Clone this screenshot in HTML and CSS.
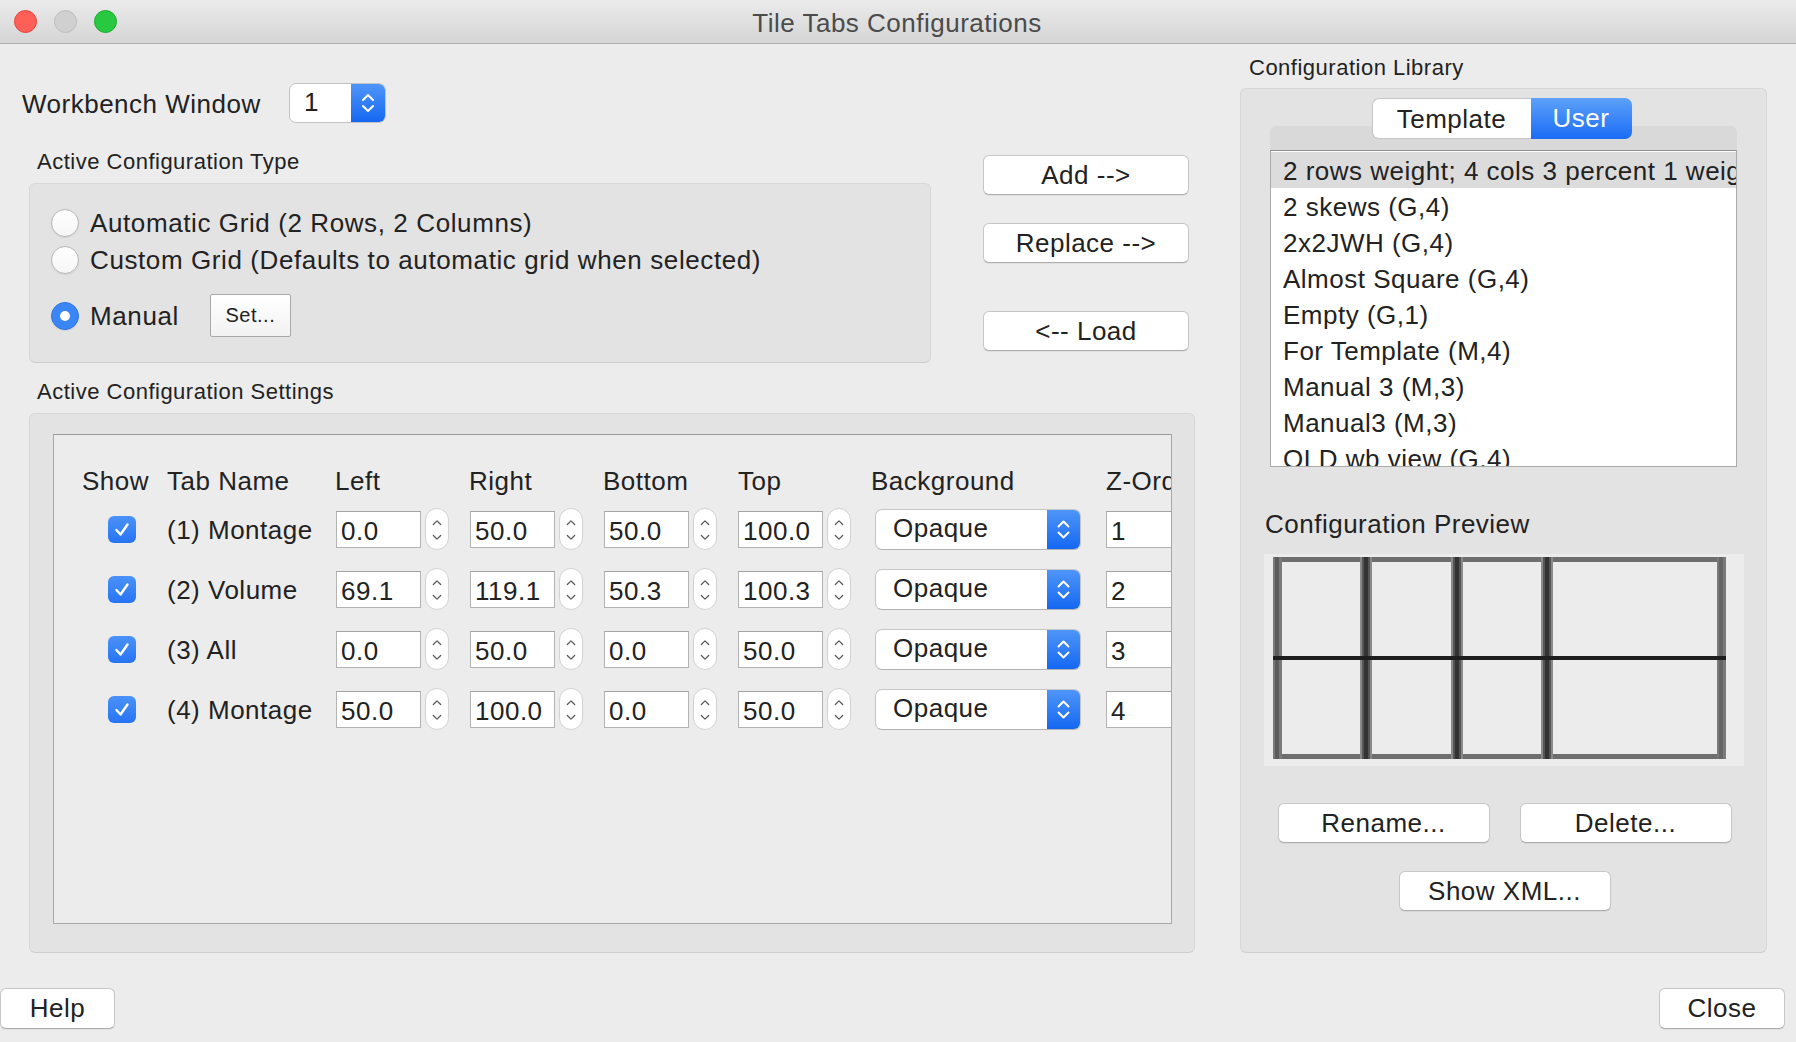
FILE: index.html
```html
<!DOCTYPE html>
<html>
<head>
<meta charset="utf-8">
<title>Tile Tabs Configurations</title>
<link rel="stylesheet" href="styles.css">
</head>
<body>
<div class="window">
  <div class="titlebar">
    <div class="lights"><span class="light red"></span><span class="light gray"></span><span class="light green"></span></div>
    <div class="title">Tile Tabs Configurations</div>
    <div></div>
  </div>
  <div class="body">
    <div class="main">
      <div class="left">
        <div class="wb-row">
          <span class="wb-label">Workbench Window</span>
          <div class="spinbox">
            <span class="spin-value">1</span>
            <span class="blue-btn"><svg width="34" height="40" viewBox="0 0 34 40"><path d="M12 17 L17 12 L22 17 M12 23 L17 28 L22 23" fill="none" stroke="#fff" stroke-width="2" stroke-linecap="round" stroke-linejoin="round"/></svg></span>
          </div>
        </div>
        <div class="upper">
          <div class="type-col">
            <div class="section-label">Active Configuration Type</div>
            <div class="group group-type">
              <div class="radio-row"><span class="radio"></span><span class="radio-text">Automatic Grid (2 Rows, 2 Columns)</span></div>
              <div class="radio-row"><span class="radio"></span><span class="radio-text">Custom Grid (Defaults to automatic grid when selected)</span></div>
              <div class="radio-row manual-row"><span class="radio on"></span><span class="radio-text">Manual</span><button class="set-btn">Set...</button></div>
            </div>
          </div>
          <div class="action-col">
            <button class="btn act">Add --&gt;</button>
            <button class="btn act act-replace">Replace --&gt;</button>
            <button class="btn act act-load">&lt;-- Load</button>
          </div>
        </div>
        <div class="section-label settings-label">Active Configuration Settings</div>
        <div class="group group-settings">
          <div class="scroll">
            <div class="tbl">
              <div class="trow thead">
                <div class="c-show">Show</div>
                <div class="c-name">Tab Name</div>
                <div class="c-num">Left</div>
                <div class="c-num">Right</div>
                <div class="c-num">Bottom</div>
                <div class="c-top">Top</div>
                <div class="c-bg">Background</div>
                <div class="c-z">Z-Order</div>
              </div>

              <div class="trow">
                <div class="c-show"><span class="check"><svg width="28" height="27" viewBox="0 0 28 27"><path d="M8.5 14 L12.5 18.5 L19.5 8.5" fill="none" stroke="#fff" stroke-width="2.4" stroke-linecap="round" stroke-linejoin="round"/></svg></span></div>
                <div class="c-name">(1) Montage</div>
                <div class="c-num"><span class="inp">0.0</span><span class="spin"><svg width="24" height="42" viewBox="0 0 24 42"><path d="M8 15 L12 11 L16 15 M8 27 L12 31 L16 27" fill="none" stroke="#5a5a5a" stroke-width="1.4" stroke-linecap="round" stroke-linejoin="round"/></svg></span></div>
                <div class="c-num"><span class="inp">50.0</span><span class="spin"><svg width="24" height="42" viewBox="0 0 24 42"><path d="M8 15 L12 11 L16 15 M8 27 L12 31 L16 27" fill="none" stroke="#5a5a5a" stroke-width="1.4" stroke-linecap="round" stroke-linejoin="round"/></svg></span></div>
                <div class="c-num"><span class="inp">50.0</span><span class="spin"><svg width="24" height="42" viewBox="0 0 24 42"><path d="M8 15 L12 11 L16 15 M8 27 L12 31 L16 27" fill="none" stroke="#5a5a5a" stroke-width="1.4" stroke-linecap="round" stroke-linejoin="round"/></svg></span></div>
                <div class="c-top"><span class="inp">100.0</span><span class="spin"><svg width="24" height="42" viewBox="0 0 24 42"><path d="M8 15 L12 11 L16 15 M8 27 L12 31 L16 27" fill="none" stroke="#5a5a5a" stroke-width="1.4" stroke-linecap="round" stroke-linejoin="round"/></svg></span></div>
                <div class="c-bg"><span class="combo"><span class="combo-text">Opaque</span><span class="blue-btn"><svg width="33" height="39" viewBox="0 0 33 39"><path d="M11.5 16.5 L16.5 11.5 L21.5 16.5 M11.5 22.5 L16.5 27.5 L21.5 22.5" fill="none" stroke="#fff" stroke-width="2" stroke-linecap="round" stroke-linejoin="round"/></svg></span></span></div>
                <div class="c-z"><span class="inp zinp">1</span></div>
              </div>

              <div class="trow">
                <div class="c-show"><span class="check"><svg width="28" height="27" viewBox="0 0 28 27"><path d="M8.5 14 L12.5 18.5 L19.5 8.5" fill="none" stroke="#fff" stroke-width="2.4" stroke-linecap="round" stroke-linejoin="round"/></svg></span></div>
                <div class="c-name">(2) Volume</div>
                <div class="c-num"><span class="inp">69.1</span><span class="spin"><svg width="24" height="42" viewBox="0 0 24 42"><path d="M8 15 L12 11 L16 15 M8 27 L12 31 L16 27" fill="none" stroke="#5a5a5a" stroke-width="1.4" stroke-linecap="round" stroke-linejoin="round"/></svg></span></div>
                <div class="c-num"><span class="inp">119.1</span><span class="spin"><svg width="24" height="42" viewBox="0 0 24 42"><path d="M8 15 L12 11 L16 15 M8 27 L12 31 L16 27" fill="none" stroke="#5a5a5a" stroke-width="1.4" stroke-linecap="round" stroke-linejoin="round"/></svg></span></div>
                <div class="c-num"><span class="inp">50.3</span><span class="spin"><svg width="24" height="42" viewBox="0 0 24 42"><path d="M8 15 L12 11 L16 15 M8 27 L12 31 L16 27" fill="none" stroke="#5a5a5a" stroke-width="1.4" stroke-linecap="round" stroke-linejoin="round"/></svg></span></div>
                <div class="c-top"><span class="inp">100.3</span><span class="spin"><svg width="24" height="42" viewBox="0 0 24 42"><path d="M8 15 L12 11 L16 15 M8 27 L12 31 L16 27" fill="none" stroke="#5a5a5a" stroke-width="1.4" stroke-linecap="round" stroke-linejoin="round"/></svg></span></div>
                <div class="c-bg"><span class="combo"><span class="combo-text">Opaque</span><span class="blue-btn"><svg width="33" height="39" viewBox="0 0 33 39"><path d="M11.5 16.5 L16.5 11.5 L21.5 16.5 M11.5 22.5 L16.5 27.5 L21.5 22.5" fill="none" stroke="#fff" stroke-width="2" stroke-linecap="round" stroke-linejoin="round"/></svg></span></span></div>
                <div class="c-z"><span class="inp zinp">2</span></div>
              </div>

              <div class="trow">
                <div class="c-show"><span class="check"><svg width="28" height="27" viewBox="0 0 28 27"><path d="M8.5 14 L12.5 18.5 L19.5 8.5" fill="none" stroke="#fff" stroke-width="2.4" stroke-linecap="round" stroke-linejoin="round"/></svg></span></div>
                <div class="c-name">(3) All</div>
                <div class="c-num"><span class="inp">0.0</span><span class="spin"><svg width="24" height="42" viewBox="0 0 24 42"><path d="M8 15 L12 11 L16 15 M8 27 L12 31 L16 27" fill="none" stroke="#5a5a5a" stroke-width="1.4" stroke-linecap="round" stroke-linejoin="round"/></svg></span></div>
                <div class="c-num"><span class="inp">50.0</span><span class="spin"><svg width="24" height="42" viewBox="0 0 24 42"><path d="M8 15 L12 11 L16 15 M8 27 L12 31 L16 27" fill="none" stroke="#5a5a5a" stroke-width="1.4" stroke-linecap="round" stroke-linejoin="round"/></svg></span></div>
                <div class="c-num"><span class="inp">0.0</span><span class="spin"><svg width="24" height="42" viewBox="0 0 24 42"><path d="M8 15 L12 11 L16 15 M8 27 L12 31 L16 27" fill="none" stroke="#5a5a5a" stroke-width="1.4" stroke-linecap="round" stroke-linejoin="round"/></svg></span></div>
                <div class="c-top"><span class="inp">50.0</span><span class="spin"><svg width="24" height="42" viewBox="0 0 24 42"><path d="M8 15 L12 11 L16 15 M8 27 L12 31 L16 27" fill="none" stroke="#5a5a5a" stroke-width="1.4" stroke-linecap="round" stroke-linejoin="round"/></svg></span></div>
                <div class="c-bg"><span class="combo"><span class="combo-text">Opaque</span><span class="blue-btn"><svg width="33" height="39" viewBox="0 0 33 39"><path d="M11.5 16.5 L16.5 11.5 L21.5 16.5 M11.5 22.5 L16.5 27.5 L21.5 22.5" fill="none" stroke="#fff" stroke-width="2" stroke-linecap="round" stroke-linejoin="round"/></svg></span></span></div>
                <div class="c-z"><span class="inp zinp">3</span></div>
              </div>

              <div class="trow">
                <div class="c-show"><span class="check"><svg width="28" height="27" viewBox="0 0 28 27"><path d="M8.5 14 L12.5 18.5 L19.5 8.5" fill="none" stroke="#fff" stroke-width="2.4" stroke-linecap="round" stroke-linejoin="round"/></svg></span></div>
                <div class="c-name">(4) Montage</div>
                <div class="c-num"><span class="inp">50.0</span><span class="spin"><svg width="24" height="42" viewBox="0 0 24 42"><path d="M8 15 L12 11 L16 15 M8 27 L12 31 L16 27" fill="none" stroke="#5a5a5a" stroke-width="1.4" stroke-linecap="round" stroke-linejoin="round"/></svg></span></div>
                <div class="c-num"><span class="inp">100.0</span><span class="spin"><svg width="24" height="42" viewBox="0 0 24 42"><path d="M8 15 L12 11 L16 15 M8 27 L12 31 L16 27" fill="none" stroke="#5a5a5a" stroke-width="1.4" stroke-linecap="round" stroke-linejoin="round"/></svg></span></div>
                <div class="c-num"><span class="inp">0.0</span><span class="spin"><svg width="24" height="42" viewBox="0 0 24 42"><path d="M8 15 L12 11 L16 15 M8 27 L12 31 L16 27" fill="none" stroke="#5a5a5a" stroke-width="1.4" stroke-linecap="round" stroke-linejoin="round"/></svg></span></div>
                <div class="c-top"><span class="inp">50.0</span><span class="spin"><svg width="24" height="42" viewBox="0 0 24 42"><path d="M8 15 L12 11 L16 15 M8 27 L12 31 L16 27" fill="none" stroke="#5a5a5a" stroke-width="1.4" stroke-linecap="round" stroke-linejoin="round"/></svg></span></div>
                <div class="c-bg"><span class="combo"><span class="combo-text">Opaque</span><span class="blue-btn"><svg width="33" height="39" viewBox="0 0 33 39"><path d="M11.5 16.5 L16.5 11.5 L21.5 16.5 M11.5 22.5 L16.5 27.5 L21.5 22.5" fill="none" stroke="#fff" stroke-width="2" stroke-linecap="round" stroke-linejoin="round"/></svg></span></span></div>
                <div class="c-z"><span class="inp zinp">4</span></div>
              </div>
            </div>
          </div>
        </div>
      </div>

      <div class="right">
        <div class="section-label lib-label">Configuration Library</div>
        <div class="group group-lib">
          <div class="tabwidget">
            <div class="tabbar">
              <span class="tab tab-template">Template</span><span class="tab tab-user">User</span>
            </div>
            <div class="pane">
              <div class="list">
                <div class="item sel">2 rows weight; 4 cols 3 percent 1 weight (G,8)</div>
                <div class="item">2 skews (G,4)</div>
                <div class="item">2x2JWH (G,4)</div>
                <div class="item">Almost Square (G,4)</div>
                <div class="item">Empty (G,1)</div>
                <div class="item">For Template (M,4)</div>
                <div class="item">Manual 3 (M,3)</div>
                <div class="item">Manual3 (M,3)</div>
                <div class="item">OLD wb view (G,4)</div>
              </div>
            </div>
          </div>
          <div class="preview-label">Configuration Preview</div>
          <div class="preview">
            <svg width="480" height="212" viewBox="0 0 480 212">
              <rect x="9" y="3" width="453" height="5" fill="#6e6e6e"/>
              <rect x="9" y="200" width="453" height="5" fill="#6e6e6e"/>
              <rect x="9" y="3" width="9" height="202" fill="#7a7a7a"/>
              <rect x="11" y="3" width="4" height="202" fill="#5c5c5c"/>
              <rect x="96" y="3" width="12" height="202" fill="#8a8a8a"/>
              <rect x="98" y="3" width="8" height="202" fill="#555"/>
              <rect x="100" y="3" width="4" height="202" fill="#333"/>
              <rect x="187" y="3" width="12" height="202" fill="#8a8a8a"/>
              <rect x="189" y="3" width="8" height="202" fill="#555"/>
              <rect x="191" y="3" width="4" height="202" fill="#333"/>
              <rect x="277" y="3" width="12" height="202" fill="#8a8a8a"/>
              <rect x="279" y="3" width="8" height="202" fill="#555"/>
              <rect x="281" y="3" width="4" height="202" fill="#333"/>
              <rect x="453" y="3" width="9" height="202" fill="#7a7a7a"/>
              <rect x="455" y="3" width="4" height="202" fill="#666"/>
              <rect x="9" y="102" width="453" height="4" fill="#1e1e1e"/>
            </svg>
          </div>
          <div class="lib-btns">
            <button class="btn lib-btn">Rename...</button>
            <button class="btn lib-btn">Delete...</button>
          </div>
          <div class="lib-btns xml-row">
            <button class="btn lib-btn">Show XML...</button>
          </div>
        </div>
      </div>
    </div>
    <div class="footer">
      <button class="btn help-btn">Help</button>
      <button class="btn close-btn">Close</button>
    </div>
  </div>
</div>
</body>
</html>
```

FILE: styles.css
```css
* { box-sizing: border-box; }
html, body { margin: 0; padding: 0; }
body {
  width: 1796px;
  height: 1042px;
  overflow: hidden;
  background: #ececec;
  font-family: "Liberation Sans", Arial, sans-serif;
  font-size: 26px;
  letter-spacing: 0.5px;
  color: #222;
}
button { font-family: inherit; letter-spacing: inherit; color: inherit; padding: 0; margin: 0; cursor: default; }

.window { width: 1796px; height: 1042px; display: flex; flex-direction: column; background: #ececec; }

/* title bar */
.titlebar {
  height: 44px; flex: none;
  display: grid; grid-template-columns: 1fr auto 1fr; align-items: center;
  background: linear-gradient(#ebebeb, #d5d5d5);
  border-bottom: 1px solid #b2b2b2;
}
.lights { display: flex; gap: 17px; padding-left: 14px; }
.light { width: 23px; height: 23px; border-radius: 50%; }
.red { background: #fe5f57; border: 1px solid #e1453f; }
.gray { background: #d0d0d0; border: 1px solid #bdbdbd; }
.green { background: #28c840; border: 1px solid #1ea932; }
.title { color: #4b4b4b; font-size: 26px; padding-top: 3px; padding-right: 2px; }

.body { flex: 1; display: flex; flex-direction: column; }
.main { display: flex; height: 909px; }

/* left */
.left { width: 1196px; flex: none; }
.wb-row { margin-top: 39px; height: 40px; display: flex; align-items: center; }
.wb-label { width: 289px; padding-left: 22px; padding-top: 3px; }
.spinbox { display: flex; width: 97px; height: 40px; border: 1px solid #c3c3c3; border-radius: 7px; background: #fff; overflow: hidden; }
.spin-value { width: 62px; padding-left: 14px; line-height: 36px; }
.blue-btn { flex: none; display: flex; align-items: center; justify-content: center; width: 34px; background: linear-gradient(#4f96f9, #1567f2); }

.section-label { font-size: 22px; line-height: 24px; height: 24px; padding-left: 8px; padding-top: 1px; }

.upper { display: flex; margin-top: 26px; }
.type-col { margin-left: 29px; width: 902px; }
.group { background: #e3e3e3; border: 1px solid #d7d7d7; border-bottom-color: #cfcfcf; border-radius: 6px; }
.group-type { margin-top: 10px; height: 180px; padding: 20px 0 0 21px; }
.radio-row { display: flex; align-items: center; height: 37px; gap: 11px; }
.radio-text { padding-top: 2px; letter-spacing: 0.6px; }
.radio { flex: none; width: 28px; height: 28px; border-radius: 50%; background: linear-gradient(#fff, #f6f6f6); border: 1px solid #b7b7b7; box-shadow: 0 1px 1px rgba(0,0,0,0.08); }
.radio.on { background: #3a86f6; border-color: #2e74e2; display: flex; align-items: center; justify-content: center; }
.radio.on::after { content: ""; width: 10px; height: 10px; border-radius: 50%; background: #fff; }
.manual-row { margin-top: 16px; height: 43px; }
.set-btn { margin-left: 20px; width: 81px; height: 43px; font-size: 20px; background: linear-gradient(#fff, #f2f2f2); border: 1px solid #a9a9a9; border-radius: 2px; }

.action-col { margin-left: 52px; padding-top: 6px; display: flex; flex-direction: column; width: 206px; }
.btn { background: #fff; border: 1px solid #c7c7c7; border-bottom-color: #adadad; border-radius: 6px; box-shadow: 0 1px 1px rgba(0,0,0,0.06); font-size: 26px; }
.act { width: 206px; height: 40px; }
.act-replace { margin-top: 28px; }
.act-load { margin-top: 48px; }

.settings-label { margin-top: 16px; padding-left: 37px; }
.group-settings { margin: 10px 0 0 29px; width: 1166px; height: 540px; padding: 20px 22px 28px 23px; }
.scroll { width: 1119px; height: 490px; border: 1px solid #a8a8a8; border-top-color: #9c9c9c; background: #ececec; overflow: hidden; }
.tbl { padding: 28px 0 0 28px; width: 1300px; }
.trow { display: flex; align-items: center; height: 60px; }
.trow.thead { height: 36px; }
.c-show { width: 85px; flex: none; display: flex; }
.c-name { width: 169px; flex: none; white-space: nowrap; padding-top: 3px; }
.thead .c-name { padding-top: 0; }
.c-num { width: 134px; flex: none; display: flex; align-items: center; }
.c-top { width: 137px; flex: none; display: flex; align-items: center; }
.c-bg { width: 231px; flex: none; display: flex; align-items: center; }
.c-z { width: 140px; flex: none; display: flex; align-items: center; }
.thead .c-num { margin-left: -1px; margin-right: 1px; }
.thead .c-bg { margin-left: -4px; margin-right: 4px; }
.check { margin-left: 26px; width: 28px; height: 27px; border-radius: 6px; background: linear-gradient(#4a92f8, #2774f3); display: flex; }
.inp { width: 85px; height: 37px; background: #fff; border: 1px solid #b3b3b3; border-top-color: #a3a3a3; padding-left: 4px; line-height: 38px; flex: none; white-space: nowrap; }
.spin { margin-left: 4px; width: 24px; height: 42px; border: 1px solid #d2d2d2; border-radius: 12px; background: #fff; display: flex; flex: none; }
.combo { display: flex; width: 206px; height: 41px; border: 1px solid #c6c6c6; border-bottom-color: #b3b3b3; border-radius: 7px; background: #fff; overflow: hidden; }
.combo-text { flex: 1; padding-left: 17px; line-height: 37px; }
.combo .blue-btn { width: 33px; }
.zinp { width: 120px; }

/* right */
.right { margin-left: 44px; width: 527px; flex: none; }
.lib-label { margin-top: 11px; padding-left: 9px; }
.group-lib { margin-top: 9px; height: 865px; padding-top: 9px; }
.tabwidget { margin: 0 29px; }
.tabbar { position: relative; z-index: 1; display: flex; justify-content: center; padding-right: 4px; height: 41px; }
.tab { height: 41px; line-height: 41px; text-align: center; }
.tab-template { width: 159px; background: #fff; border: 1px solid #c5c5c5; border-right: none; border-radius: 7px 0 0 7px; line-height: 39px; padding-top: 1px; }
.tab-user { width: 101px; background: linear-gradient(#5da1fb, #1a6cf4); color: #fff; border-radius: 0 7px 7px 0; }
.pane { margin-top: -13px; padding-top: 24px; background: #d9d9d9; border-radius: 6px 6px 0 0; }
.list { height: 317px; background: #fff; border: 1px solid #aaaaaa; border-top-color: #8c8c8c; overflow: hidden; padding-top: 1px; }
.item { height: 36px; line-height: 38px; padding-left: 12px; white-space: nowrap; }
.item.sel { background: #dcdcdc; }
.preview-label { margin-top: 41px; line-height: 30px; padding-left: 24px; padding-top: 1px; }
.preview { margin: 15px 0 0 23px; width: 480px; height: 212px; background: #ececec; display: flex; }
.lib-btns { display: flex; justify-content: center; gap: 30px; margin-top: 37px; padding-left: 2px; }
.xml-row { margin-top: 28px; }
.lib-btn { width: 212px; height: 40px; }

/* footer */
.footer { display: flex; justify-content: space-between; margin-top: 35px; padding-right: 11px; }
.help-btn { width: 115px; height: 41px; }
.close-btn { width: 126px; height: 41px; }
```
